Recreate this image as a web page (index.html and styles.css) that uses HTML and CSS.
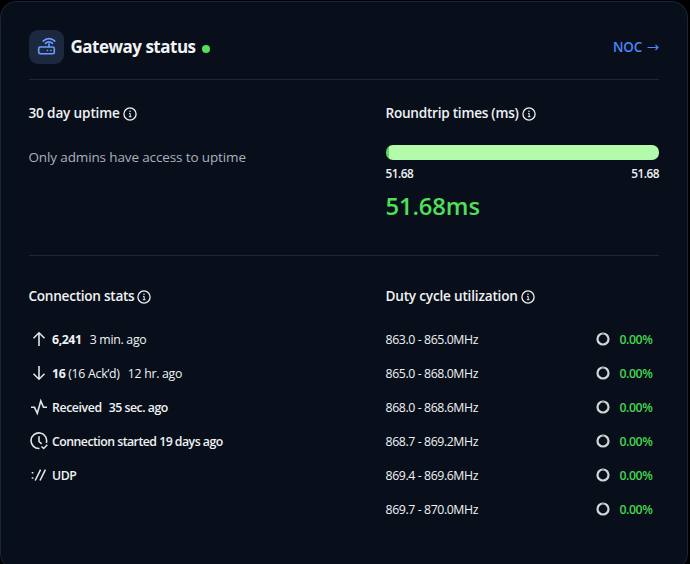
FILE: index.html
```html
<!DOCTYPE html>
<html lang="en">
<head>
<meta charset="utf-8">
<title>Gateway status</title>
<link rel="stylesheet" href="styles.css">
</head>
<body>
<svg class="defs" width="0" height="0" aria-hidden="true">
  <symbol id="info" viewBox="0 0 14 14"><circle cx="7" cy="7" r="6.1" fill="none" stroke="currentColor" stroke-width="1.3"/><path d="M6 6.4h1.2v3.2M5.9 9.7h2.6" fill="none" stroke="currentColor"/><circle cx="7" cy="4.3" r=".75" fill="currentColor"/></symbol>
  <symbol id="ring" viewBox="0 0 14 14"><circle cx="7" cy="7" r="5.5" fill="none" stroke="#d3d5d8" stroke-width="2.2"/><path d="M6.3 1.5h1.4" stroke="#4f9d6a" stroke-width="2"/></symbol>
</svg>
<main class="card">
  <header class="header">
    <div class="tile">
      <svg width="19" height="19" viewBox="0 0 19 19" fill="none" stroke="#6c9cff" stroke-width="1.6" stroke-linecap="round">
        <rect x="1.7" y="10" width="15.6" height="6.8" rx="1.6"/>
        <path d="M12 9.8V6.8M6.2 4.1C9.3.8 14.7.8 17.8 4.1M8.5 6.4c1.9-2 5.1-2 7 0"/>
        <path d="M10.4 13.5h.2M13.8 13.5h.2" stroke-width="1.6"/>
      </svg>
    </div>
    <h1 class="title"><span>Gateway status</span></h1>
    <span class="dot"></span>
    <a class="noc"><span>NOC</span><svg width="12" height="8" viewBox="0 0 12 8" fill="none" stroke="currentColor" stroke-width="1.2"><path d="M.5 4.5H11M8.5 2l2.5 2.5L8.5 7"/></svg></a>
  </header>
  <section class="row summary">
    <div>
      <h2 class="t-uptime"><span>30 day uptime</span><svg class="info"><use href="#info"/></svg></h2>
      <p class="note"><span>Only admins have access to uptime</span></p>
    </div>
    <div>
      <h2 class="t-round"><span>Roundtrip times (ms)</span><svg class="info"><use href="#info"/></svg></h2>
      <div class="bar"></div>
      <div class="range"><span>51.68</span><span>51.68</span></div>
      <p class="value"><span>51.68ms</span></p>
    </div>
  </section>
  <section class="row details">
    <div>
      <h2 class="t-conn"><span>Connection stats</span><svg class="info"><use href="#info"/></svg></h2>
      <ul class="stats">
        <li><svg class="ico" viewBox="0 0 18 18"><path d="M9 16V3M3.5 8.2 9 2.8l5.5 5.4"/></svg><b>6,241</b><span class="gap light">3 min. ago</span></li>
        <li><svg class="ico" viewBox="0 0 18 18"><path d="M9 2v13M3.5 9.8 9 15.2l5.5-5.4"/></svg><b>16</b><span class="ack light">(16 Ack’d)</span><span class="gap light">12 hr. ago</span></li>
        <li><svg class="ico" viewBox="0 0 18 18"><path d="M1 9.3h3.5l2.8 6L10.8 3l2.7 6.3H17"/></svg><span>Received</span><span class="gap-s">35 sec. ago</span></li>
        <li><svg class="ico" viewBox="0 0 18 18"><path d="M9.5 16.5A7.8 7.8 0 1 1 16.3 11M9 4.2v5.3l2.7 2.4M11.5 14.5l2.2 2 3.6-3.7"/></svg><span class="started">Connection started 19 days ago</span></li>
        <li><svg class="ico" viewBox="0 0 18 18"><path d="M1.7 6.8h1.7M1.7 12h1.7M5.2 14.5l5.4-10.8M10 14.5l5.4-10.8"/></svg><span>UDP</span></li>
      </ul>
    </div>
    <div>
      <h2 class="t-duty"><span>Duty cycle utilization</span><svg class="info"><use href="#info"/></svg></h2>
      <ul class="duty">
        <li><span>863.0 - 865.0MHz</span><svg class="ring"><use href="#ring"/></svg><b>0.00%</b></li>
        <li><span>865.0 - 868.0MHz</span><svg class="ring"><use href="#ring"/></svg><b>0.00%</b></li>
        <li><span>868.0 - 868.6MHz</span><svg class="ring"><use href="#ring"/></svg><b>0.00%</b></li>
        <li><span>868.7 - 869.2MHz</span><svg class="ring"><use href="#ring"/></svg><b>0.00%</b></li>
        <li><span>869.4 - 869.6MHz</span><svg class="ring"><use href="#ring"/></svg><b>0.00%</b></li>
        <li><span>869.7 - 870.0MHz</span><svg class="ring"><use href="#ring"/></svg><b>0.00%</b></li>
      </ul>
    </div>
  </section>
</main>
</body>
</html>
```
FILE: styles.css
```css
* { box-sizing: border-box; }
html { background: #000; overflow: hidden; }
body { margin: 0; height: 564px; overflow: hidden; font-family: "Segoe UI", "Open Sans", "Noto Sans", sans-serif; color: #f0f2f5; }
.defs { display: block; height: 0; }
h1, h2, p, ul { margin: 0; padding: 0; list-style: none; }
svg { flex: none; }
.card { width: 688px; height: 569px; margin-top: 1px; padding: 0 28px 0 27.5px; background: #080f1a; border: 1px solid #17253a; border-radius: 16px; }
.header { height: 78px; padding-top: 12px; display: flex; align-items: center; border-bottom: 1px solid #1c2738; }
.tile { width: 35px; height: 34px; border-radius: 9px; background: #1b283d; display: grid; place-items: center; }
.title { margin-left: 7px; width: 125px; font-size: 17px; line-height: 24px; font-weight: 700; letter-spacing: -.5px; white-space: nowrap; }
.dot { width: 8px; height: 8px; margin: 4px 0 0 6px; border-radius: 50%; background: #56df5b; }
.noc { margin-left: auto; padding-top: 1px; display: flex; align-items: center; gap: 5px; color: #4c86fb; font-size: 13.4px; font-weight: 600; letter-spacing: -.2px; }
.row { display: grid; grid-template-columns: 357px 1fr; }
.summary { height: 176px; padding-top: 23px; border-bottom: 1px solid #1c2738; }
.details { padding-top: 30px; }
h2 { height: 20px; display: flex; align-items: center; gap: 3px; font-size: 13.6px; font-weight: 600; letter-spacing: -.2px; white-space: nowrap; }
h2 span { margin-top: -1px; }
.t-uptime { letter-spacing: -.16px; }
.t-round { letter-spacing: -.25px; }
.t-conn { letter-spacing: -.27px; }
.info { width: 14px; height: 14px; margin-top: 1px; }
.note { margin-top: 24px; font-size: 13.5px; line-height: 20px; letter-spacing: -.13px; color: #a9b1bd; white-space: nowrap; }
.bar { height: 15px; margin-top: 21.5px; border-radius: 7px; background: linear-gradient(90deg, #58d966 3px, #b3faaa 3px); }
.range { display: flex; justify-content: space-between; margin-top: 5px; line-height: 17px; font-size: 11.8px; font-weight: 600; letter-spacing: -.5px; }
.value { margin-top: 7px; line-height: 34px; font-size: 23.8px; font-weight: 600; letter-spacing: -.12px; color: #50df58; }
.stats, .duty { margin-top: 16px; font-size: 12.3px; font-weight: 600; letter-spacing: -.4px; }
li { height: 34px; display: flex; align-items: center; white-space: nowrap; }
.ico { width: 18px; height: 18px; margin: 0 4px 0 1.5px; fill: none; stroke: #e1e3e6; stroke-width: 1.6; }
.gap { margin-left: 8px; }
.gap-s { margin-left: 7px; letter-spacing: -.48px; }
.ack { margin-left: 3px; }
.started { letter-spacing: -.52px; }
.stats b { font-weight: 700; }
.light { font-weight: 400; }
.stats .light { letter-spacing: -.28px; }
.duty span { font-weight: 400; width: 210px; }
.ring { width: 14px; height: 14px; }
.duty b { margin-left: 10px; font-weight: 600; letter-spacing: -.45px; color: #43d650; }
```
